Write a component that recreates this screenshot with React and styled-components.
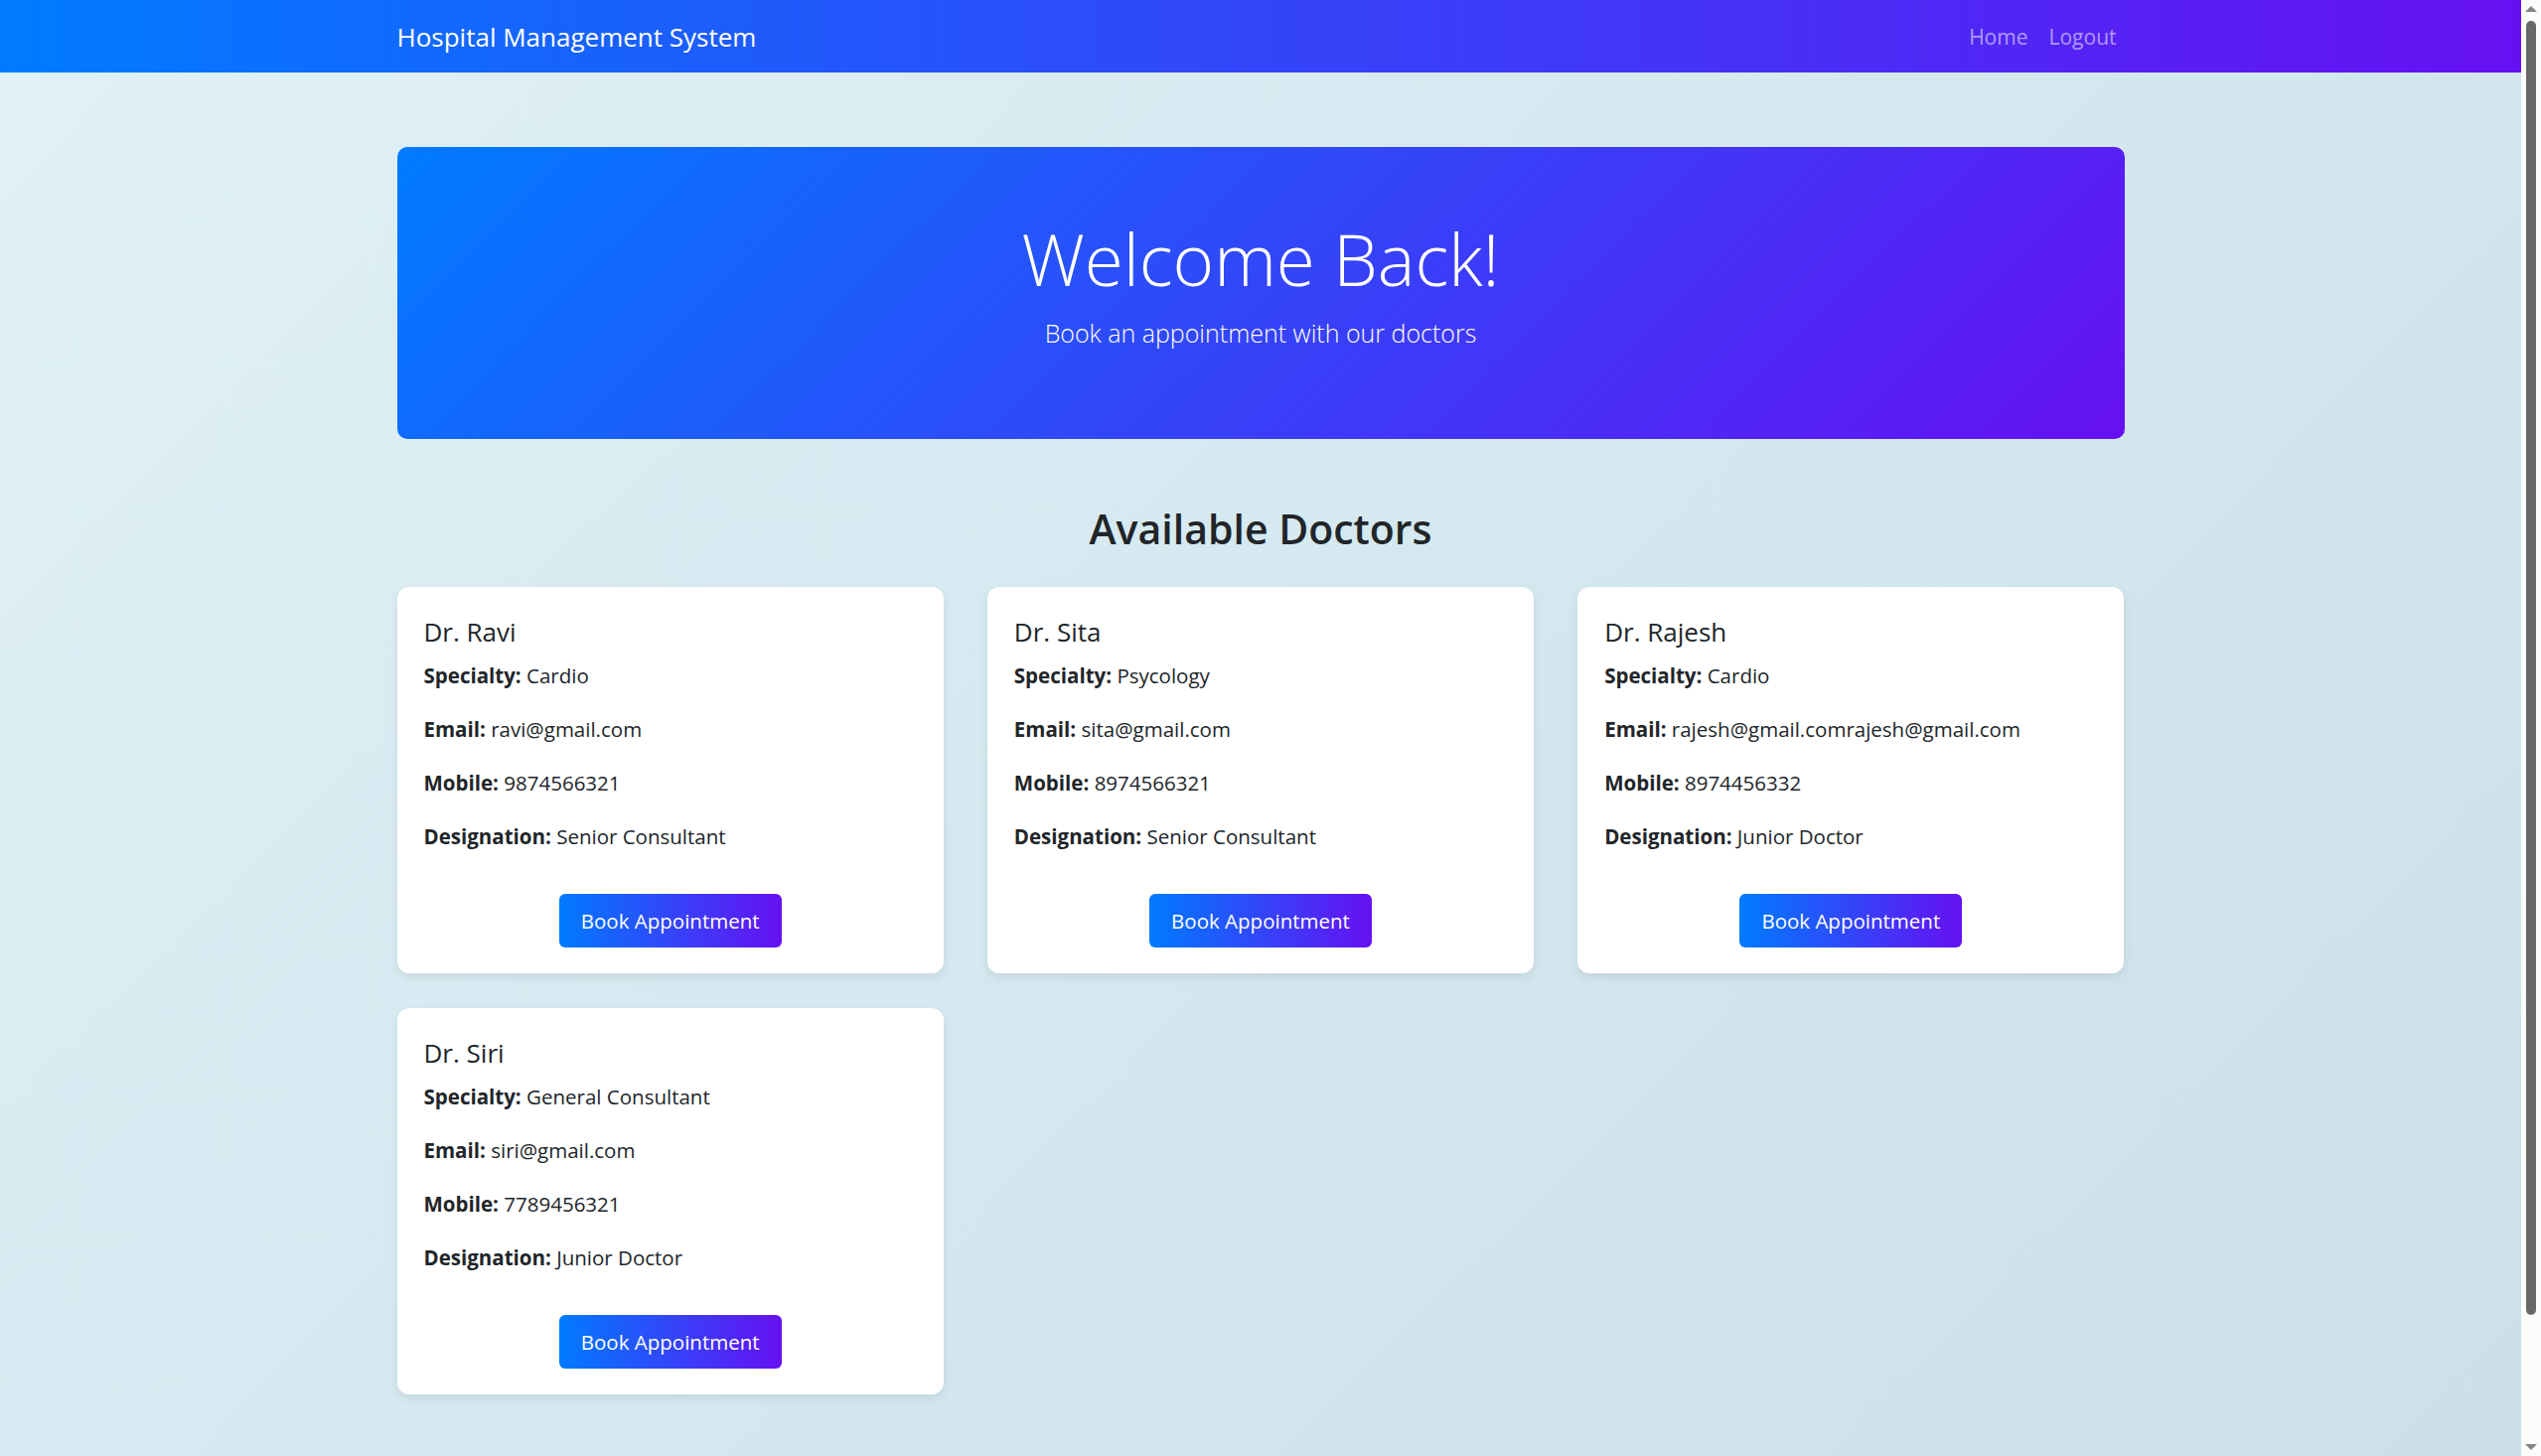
import React from 'react';
import styled, { createGlobalStyle } from 'styled-components';

const GlobalStyle = createGlobalStyle`
    html, body {
        margin: 0;
        height: 100%;
        overflow: hidden;
    }
    body {
        font-family: "Open Sans", "Noto Sans", sans-serif;
        color: #212529;
    }
`;

const Window = styled.div`
    display: flex;
    height: 100vh;
`;

const Scroller = styled.div`
    flex: 1;
    overflow-y: auto;
    scrollbar-width: none;
`;

/* the browser's scroll bar, drawn since the headless page hides it */
const Rail = styled.div`
    width: 20px;
    flex: none;
    background: #fcfcfc;
    display: flex;
    flex-direction: column;
    align-items: center;
`;

const Arrow = styled.div`
    height: 18px;
    display: flex;
    align-items: center;
    justify-content: center;

    &::before {
        content: "";
        border-left: 6px solid transparent;
        border-right: 6px solid transparent;
        ${props => props.down
            ? 'border-top: 6px solid #858585;'
            : 'border-bottom: 6px solid #858585;'}
    }
`;

const Track = styled.div`
    flex: 1;
    width: 100%;
    display: flex;
    justify-content: center;
    padding-top: 3px;
`;

const Thumb = styled.div`
    width: 10px;
    height: 1303px;
    border-radius: 5px;
    background: #686868;
`;

const Page = styled.div`
    background: linear-gradient(135deg, #e0f1f7 0%, #d3e7ee 55%, #cbdfe7 100%);
`;

const Navbar = styled.nav`
    height: 73px;
    background: linear-gradient(to right, #007bff, #6610f2);
    display: flex;
    align-items: center;
`;

const NavInner = styled.div`
    width: 1739px;
    margin: 0 auto;
    display: flex;
    align-items: center;
    justify-content: space-between;
`;

const Brand = styled.a`
    color: #ffffff;
    font-size: 26px;
    text-decoration: none;
`;

const NavLinks = styled.div`
    display: flex;
    gap: 21px;
    padding-right: 8px;
`;

const NavLink = styled.a`
    color: rgba(255, 255, 255, 0.55);
    font-size: 21px;
    text-decoration: none;
`;

const Main = styled.main`
    width: 1739px;
    margin: 0 auto;
    padding: 75px 0 213px;
`;

const Hero = styled.section`
    height: 294px;
    border-radius: 10px;
    background: linear-gradient(135deg, #007bff, #6610f2);
    color: #ffffff;
    display: flex;
    flex-direction: column;
    align-items: center;
    padding-top: 70px;
    box-sizing: border-box;
`;

const HeroTitle = styled.h1`
    margin: 0;
    font-size: 71px;
    font-weight: 300;
    line-height: 1.2;
`;

const HeroLead = styled.p`
    margin: 15px 0 0;
    font-size: 25px;
    font-weight: 300;
`;

const SectionTitle = styled.h2`
    margin: 66px 0 34px;
    text-align: center;
    font-size: 41px;
    font-weight: 600;
    line-height: 1.2;
    color: #212529;
`;

const Grid = styled.div`
    display: grid;
    grid-template-columns: repeat(3, 1fr);
    column-gap: 44px;
    row-gap: 35px;
`;

const Card = styled.div`
    background: #ffffff;
    border-radius: 12px;
    padding: 29px 27px 26px;
    box-shadow: 0 4px 10px rgba(0, 0, 0, 0.08);
    display: flex;
    flex-direction: column;
`;

const CardTitle = styled.h5`
    margin: 0 0 12px;
    font-size: 26px;
    font-weight: 500;
    line-height: 32px;
`;

const Info = styled.p`
    margin: 0 0 22px;
    font-size: 20.5px;
    line-height: 32px;

    b {
        font-weight: 700;
    }
`;

const BookButton = styled.button`
    align-self: center;
    margin-top: 20px;
    height: 54px;
    padding: 0 22px;
    border: none;
    border-radius: 6px;
    background: linear-gradient(to right, #007bff, #6610f2);
    color: #ffffff;
    font-family: inherit;
    font-size: 20.5px;
    cursor: pointer;
`;

const doctors = [
    { name: 'Dr. Ravi', specialty: 'Cardio', email: 'ravi@gmail.com', mobile: '9874566321', designation: 'Senior Consultant' },
    { name: 'Dr. Sita', specialty: 'Psycology', email: 'sita@gmail.com', mobile: '8974566321', designation: 'Senior Consultant' },
    { name: 'Dr. Rajesh', specialty: 'Cardio', email: 'rajesh@gmail.comrajesh@gmail.com', mobile: '8974456332', designation: 'Junior Doctor' },
    { name: 'Dr. Siri', specialty: 'General Consultant', email: 'siri@gmail.com', mobile: '7789456321', designation: 'Junior Doctor' },
];

const App = () => {
  return (
    <Window>
        <GlobalStyle />
        <Scroller>
            <Page>
                <Navbar>
                    <NavInner>
                        <Brand href="#">Hospital Management System</Brand>
                        <NavLinks>
                            <NavLink href="#">Home</NavLink>
                            <NavLink href="#">Logout</NavLink>
                        </NavLinks>
                    </NavInner>
                </Navbar>
                <Main>
                    <Hero>
                        <HeroTitle>Welcome Back!</HeroTitle>
                        <HeroLead>Book an appointment with our doctors</HeroLead>
                    </Hero>
                    <SectionTitle>Available Doctors</SectionTitle>
                    <Grid>
                        {doctors.map(doc => (
                            <Card key={doc.name}>
                                <CardTitle>{doc.name}</CardTitle>
                                <Info><b>Specialty:</b> {doc.specialty}</Info>
                                <Info><b>Email:</b> {doc.email}</Info>
                                <Info><b>Mobile:</b> {doc.mobile}</Info>
                                <Info><b>Designation:</b> {doc.designation}</Info>
                                <BookButton>Book Appointment</BookButton>
                            </Card>
                        ))}
                    </Grid>
                </Main>
            </Page>
        </Scroller>
        <Rail>
            <Arrow />
            <Track><Thumb /></Track>
            <Arrow down />
        </Rail>
    </Window>
  )
};

export default App;
